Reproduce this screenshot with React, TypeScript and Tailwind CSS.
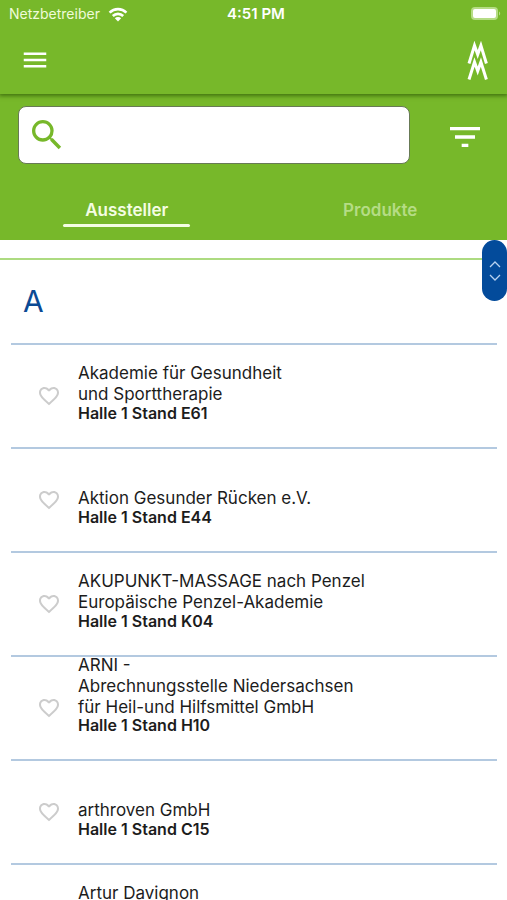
import { useState } from "react";
import { MdFavoriteBorder, MdFilterList, MdMenu, MdSearch } from "react-icons/md";

type Exhibitor = { name: string[]; stand: string };

const exhibitors: Exhibitor[] = [
  { name: ["Akademie für Gesundheit", "und Sporttherapie"], stand: "Halle 1 Stand E61" },
  { name: ["Aktion Gesunder Rücken e.V."], stand: "Halle 1 Stand E44" },
  { name: ["AKUPUNKT-MASSAGE nach Penzel", "Europäische Penzel-Akademie"], stand: "Halle 1 Stand K04" },
  {
    name: ["ARNI -", "Abrechnungsstelle Niedersachsen", "für Heil-und Hilfsmittel GmbH"],
    stand: "Halle 1 Stand H10",
  },
  { name: ["arthroven GmbH"], stand: "Halle 1 Stand C15" },
  { name: ["Artur Davignon", ""], stand: "" },
];

function StatusBar() {
  return (
    <div className="grid h-7 grid-cols-3 items-center pr-1 pl-[9px]">
      <div className="flex items-center gap-1">
        <span className="text-sm text-[#effbd9]">Netzbetreiber</span>
        <svg viewBox="0 0 20 15" className="ml-1 h-[15px] w-5" fill="none" stroke="currentColor" strokeWidth="2.6" aria-hidden="true">
          <path d="M1.6 5.6a12 12 0 0 1 16.8 0" />
          <path d="M4.8 9a7.4 7.4 0 0 1 10.4 0" />
          <path d="M10 14.4 6.8 11.2a4.6 4.6 0 0 1 6.4 0z" fill="currentColor" stroke="none" />
        </svg>
      </div>
      <span className="text-center text-[15px] font-semibold">4:51 PM</span>
      <svg viewBox="0 0 32 14" className="h-[14px] w-8 justify-self-end" aria-hidden="true">
        <rect x="0" y="0" width="27" height="13" rx="4" fill="#b5dc85" />
        <rect x="2" y="2" width="23" height="9" rx="2" fill="#fff" />
        <path d="M28 4.5v4c1.6-.6 1.6-3.4 0-4z" fill="#b5dc85" />
      </svg>
    </div>
  );
}

function Logo() {
  return (
    <svg viewBox="0 0 22 40" className="h-10 w-[22px]" fill="none" stroke="currentColor" strokeWidth="3" role="img" aria-label="Leipziger Messe">
      <path d="M2 22.500 7.500 4.500 10.700 13.500 13.900 4.500 19.400 22.500" />
      <path d="M2 38.500 7.500 21 10.700 30 13.900 21 19.400 38.500" />
    </svg>
  );
}

function Row({ name, stand }: Exhibitor) {
  return (
    <li className="flex h-[104px] shrink-0 items-start border-t-2 border-[#b3c9e0]">
      <button type="button" aria-label="Als Favorit merken" className="mt-[39px] ml-[26px] text-[#cccccc]">
        <MdFavoriteBorder className="size-6" />
      </button>
      <div className="-mt-0.5 ml-[17px]">
        <p className="flex h-[62px] flex-col text-[17px] leading-[21px] [justify-content:safe_end]">
          {name.map((line) => (
            <span key={line} className="block min-h-[21px] whitespace-nowrap">
              {line}
            </span>
          ))}
        </p>
        <p className="text-base leading-4 font-semibold">{stand}</p>
      </div>
    </li>
  );
}

export default function App() {
  const [tab, setTab] = useState("Aussteller");
  return (
    <div className="flex h-screen flex-col overflow-hidden bg-white font-['Inter',sans-serif] text-[#1c1c1c]">
      <header className="z-10 bg-[#77b82a] text-white shadow-[0_1px_4px_1px_rgba(40,80,0,0.65)]">
        <StatusBar />
        <div className="flex h-[66px] items-center justify-between pr-[18px] pl-5">
          <button type="button" aria-label="Menü" className="mb-0.5">
            <MdMenu className="size-[30px]" />
          </button>
          <Logo />
        </div>
      </header>

      <div className="bg-[#77b82a] pt-3 text-white">
        <div className="flex items-center pl-[18px]">
          <label className="flex h-[58px] flex-1 items-center rounded-lg border border-[#687a55] bg-white pl-2">
            <MdSearch className="size-10 text-[#77b82a]" />
            <input type="search" aria-label="Suche" className="h-full min-w-0 flex-1 px-2 text-lg text-[#1c1c1c] outline-none" />
          </label>
          <button type="button" aria-label="Filter" className="mt-1 mr-[22px] ml-[35px]">
            <MdFilterList className="size-10" />
          </button>
        </div>
        <div role="tablist" className="mt-7 flex h-12">
          {["Aussteller", "Produkte"].map((label) => (
            <button
              key={label}
              type="button"
              role="tab"
              aria-selected={tab === label}
              onClick={() => setTab(label)}
              className={`flex flex-1 flex-col items-center pt-1 text-[17px] leading-7 font-semibold ${tab === label ? "text-[#f4fde3]" : "text-[#b5dc85]"}`}
            >
              {label}
              <span className={`h-[3px] w-1/2 rounded-full ${tab === label ? "bg-[#f4fde3]" : ""}`} />
            </button>
          ))}
        </div>
      </div>

      <main className="relative flex min-h-0 flex-1 flex-col">
        <div className="h-5 shrink-0 border-b-2 border-[#addb81]" />
        <section className="min-h-0 flex-1 overflow-y-auto pr-[10px] pl-[11px] [scrollbar-width:none]">
          <h2 className="flex h-[83px] items-center pl-3 text-[30px] text-[#0b4a94]">A</h2>
          <ul>
            {exhibitors.map((e) => (
              <Row key={e.name[0]} {...e} />
            ))}
          </ul>
        </section>
        <button
          type="button"
          aria-label="Schnell blättern"
          className="absolute top-0 right-0 flex h-[61px] w-[25px] items-center justify-center rounded-full bg-[#034b9b] text-[#b9d2f0]"
        >
          <svg viewBox="0 0 12 20" className="h-5 w-3" fill="none" stroke="currentColor" strokeWidth="1.3" aria-hidden="true">
            <path d="M1 6 6 1l5 5M1 14l5 5 5-5" />
          </svg>
        </button>
      </main>
    </div>
  );
}
